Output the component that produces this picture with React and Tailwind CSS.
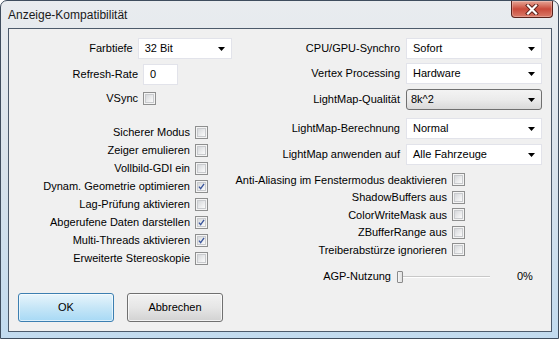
const leftChecks = [
  ["Sicherer Modus", false],
  ["Zeiger emulieren", false],
  ["Vollbild-GDI ein", false],
  ["Dynam. Geometrie optimieren", true],
  ["Lag-Prüfung aktivieren", false],
  ["Abgerufene Daten darstellen", true],
  ["Multi-Threads aktivieren", true],
  ["Erweiterte Stereoskopie", false],
];

const rightChecks = [
  "Anti-Aliasing im Fenstermodus deaktivieren",
  "ShadowBuffers aus",
  "ColorWriteMask aus",
  "ZBufferRange aus",
  "Treiberabstürze ignorieren",
];

function Check({ on }) {
  return (
    <span className="flex h-[13px] w-[13px] shrink-0 items-center justify-center border border-[#8e8f8f] bg-[#f4f4f4] p-[1px]">
      <span className="flex h-full w-full items-center justify-center border border-[#c9cbce] bg-gradient-to-br from-[#d6d8db] to-[#fbfbfb]">
        {on && (
          <svg width="9" height="9" viewBox="0 0 9 9">
            <path
              d="M1.2 4.6 L3.4 7.3 L7.8 1"
              fill="none"
              stroke="#3a559b"
              strokeWidth="1.7"
            />
          </svg>
        )}
      </span>
    </span>
  );
}

function Arrow() {
  return (
    <svg width="7" height="4" viewBox="0 0 7 4" className="mr-[6px]">
      <path d="M0 0 H7 L3.5 4 Z" fill="#000" />
    </svg>
  );
}

function Select({ value, className, button }) {
  const look = button
    ? "rounded-[3px] border-[#707070] bg-gradient-to-b from-[#f3f3f3] via-[#ebebeb] to-[#d9d9d9] pl-[4px]"
    : "border-[#e2e3ea] bg-white pl-[6px]";
  return (
    <div className={`flex h-[21px] items-center justify-between border ${look} ${className}`}>
      <span>{value}</span>
      <Arrow />
    </div>
  );
}

function RightRow({ label, value, mt, button }) {
  return (
    <div className={`flex h-[21px] items-center ${mt}`}>
      <span className="w-[168px] text-right">{label}</span>
      <Select className="ml-[6px] w-[136px]" value={value} button={button} />
    </div>
  );
}

export default function App() {
  return (
    <div className="flex h-[339px] w-[559px] flex-col overflow-hidden rounded-t-[7px] border border-[#3f4d5e] bg-gradient-to-b from-[#e9ecef] via-[#d8e2eb] to-[#c2dbef] font-['Liberation_Sans',Arial,sans-serif] text-[11px] text-black">
      {/* title bar */}
      <div className="flex h-[27px] shrink-0 items-start justify-between">
        <span className="ml-[7px] mt-[7px] text-[12px] leading-[14px] text-[#1a1a1a]">
          Anzeige-Kompatibilität
        </span>
        <div className="mr-[5px] flex h-[17px] w-[42px] items-center justify-center rounded-b-[4px] border border-t-0 border-[#5a231c] bg-gradient-to-b from-[#e6a596] via-[#c94a3b] to-[#d97a68] shadow-[inset_0_0_0_1px_rgba(255,255,255,0.25)]">
          <svg width="14" height="11" viewBox="0 0 14 11">
            <path
              d="M3 1.5 L11 9.5 M11 1.5 L3 9.5"
              stroke="#5a1f18"
              strokeWidth="4"
              strokeLinecap="square"
            />
            <path
              d="M3 1.5 L11 9.5 M11 1.5 L3 9.5"
              stroke="#fff"
              strokeWidth="2.2"
              strokeLinecap="square"
            />
          </svg>
        </div>
      </div>

      {/* client area */}
      <div className="ml-[7px] mr-[6px] flex h-[304px] flex-col border border-[#4c5a6b] bg-[#f0f0f0]">
        <div className="flex">
          {/* left column */}
          <div className="flex w-[223px] flex-col">
            <div className="mt-[9px] flex h-[21px] items-center">
              <span className="w-[129px] text-right">Farbtiefe</span>
              <Select className="ml-[5px] w-[98px]" value="32 Bit" />
            </div>
            <div className="mt-[5px] flex h-[21px] items-center">
              <span className="w-[129px] text-right">Refresh-Rate</span>
              <div className="ml-[5px] flex h-[21px] w-[35px] items-center border border-[#e2e3ea] bg-white pl-[6px]">
                0
              </div>
            </div>
            <div className="mt-[5px] flex h-[17px] items-center">
              <span className="w-[129px] text-right">VSync</span>
              <span className="ml-[5px]">
                <Check on={false} />
              </span>
            </div>
            <div className="mt-[16px] flex flex-col">
              {leftChecks.map(([label, on]) => (
                <div key={label} className="flex h-[18px] items-center">
                  <span className="w-[181px] whitespace-nowrap text-right">{label}</span>
                  <span className="ml-[5px]">
                    <Check on={on} />
                  </span>
                </div>
              ))}
            </div>
          </div>

          {/* right column */}
          <div className="flex flex-1 flex-col">
            <RightRow label="CPU/GPU-Synchro" value="Sofort" mt="mt-[9px]" />
            <RightRow label="Vertex Processing" value="Hardware" mt="mt-[4px]" />
            <RightRow label="LightMap-Qualität" value="8k^2" mt="mt-[5px]" button />
            <RightRow label="LightMap-Berechnung" value="Normal" mt="mt-[8px]" />
            <RightRow label="LightMap anwenden auf" value="Alle Fahrzeuge" mt="mt-[5px]" />
            <div className="mt-[6px] flex flex-col">
              {rightChecks.map((label) => (
                <div key={label} className="flex h-[17.5px] items-center">
                  <span className="w-[215px] whitespace-nowrap text-right">{label}</span>
                  <span className="ml-[5px]">
                    <Check on={false} />
                  </span>
                </div>
              ))}
            </div>
            <div className="mt-[11px] flex h-[14px] items-center">
              <span className="w-[159px] text-right">AGP-Nutzung</span>
              <div className="relative ml-[6px] h-[12px] w-[93px]">
                <div className="absolute left-[2px] right-0 top-[5px] h-[2px] border-t border-[#c8c8c8] bg-white" />
                <div className="absolute left-0 top-0 h-[12px] w-[6px] rounded-[1px] border border-[#8a8a8a] bg-gradient-to-r from-[#f7f7f7] to-[#e0e0e0]" />
              </div>
              <span className="ml-[27px]">0%</span>
            </div>
          </div>
        </div>

        {/* buttons */}
        <div className="mt-auto flex gap-[13px] pb-[9px] pl-[9px]">
          <button className="flex h-[29px] w-[96px] items-center justify-center rounded-[3px] border border-[#3c7fb1] bg-gradient-to-b from-[#e8f5fc] via-[#c6e6f7] to-[#a7d9f5] shadow-[inset_0_0_0_1px_rgba(255,255,255,0.6)]">
            OK
          </button>
          <button className="flex h-[29px] w-[96px] items-center justify-center rounded-[3px] border border-[#707070] bg-gradient-to-b from-[#f2f2f2] via-[#e6e6e6] to-[#d2d2d2] shadow-[inset_0_0_0_1px_rgba(255,255,255,0.7)]">
            Abbrechen
          </button>
        </div>
      </div>
    </div>
  );
}
